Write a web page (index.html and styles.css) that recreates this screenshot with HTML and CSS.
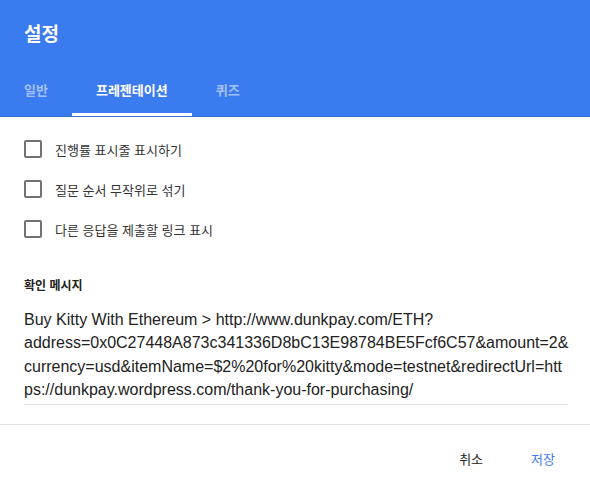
FILE: index.html
```html
<!DOCTYPE html>
<html lang="ko">
<head>
<meta charset="utf-8">
<link rel="stylesheet" href="styles.css">
</head>
<body>
<div class="dialog">
  <header class="header">
    <h1 class="title">설정</h1>
    <nav class="tabs">
      <div class="tab">일반</div>
      <div class="tab active">프레젠테이션</div>
      <div class="tab">퀴즈</div>
    </nav>
  </header>
  <section class="content">
    <div class="options">
      <label class="option"><span class="box"></span><span class="opt-text">진행률 표시줄 표시하기</span></label>
      <label class="option"><span class="box"></span><span class="opt-text">질문 순서 무작위로 섞기</span></label>
      <label class="option"><span class="box"></span><span class="opt-text">다른 응답을 제출할 링크 표시</span></label>
    </div>
    <div class="msg-label">확인 메시지</div>
    <div class="msg">Buy Kitty With Ethereum &gt; http://www.dunkpay.com/ETH?<br>address=0x0C27448A873c341336D8bC13E98784BE5Fcf6C57&amp;amount=2&amp;<br>currency=usd&amp;itemName=$2%20for%20kitty&amp;mode=testnet&amp;redirectUrl=htt<br>ps://dunkpay.wordpress.com/thank-you-for-purchasing/</div>
  </section>
  <footer class="footer">
    <button class="btn">취소</button>
    <button class="btn primary">저장</button>
  </footer>
</div>
</body>
</html>
```
FILE: styles.css
```css
* { box-sizing: border-box; }
html, body { margin: 0; padding: 0; background: #fff; }
body {
  font-family: "Liberation Sans", "Noto Sans CJK KR", sans-serif;
  width: 590px;
  height: 489px;
  overflow: hidden;
}
.dialog { width: 590px; }
.header {
  background: #3a7bf0;
  height: 117px;
  border-bottom: 1px solid #3570da;
  display: flex;
  flex-direction: column;
}
.title {
  margin: 0;
  padding: 20px 24px 0;
  height: 68px;
  font-family: "Noto Sans CJK KR", sans-serif;
  font-size: 19px;
  font-weight: 700;
  color: #fff;
  line-height: 26px;
}
.tabs {
  display: flex;
  height: 48px;
  padding-left: 0;
}
.tab {
  font-family: "Noto Sans CJK KR", sans-serif;
  font-size: 13px;
  font-weight: 700;
  color: rgba(255,255,255,0.55);
  height: 48px;
  line-height: 44px;
  padding: 0 24px;
  border-bottom: 3px solid transparent;
}
.tab.active {
  color: #fff;
  border-bottom-color: #fff;
}
.content {
  padding: 23px 24px 0;
}
.options {
  display: flex;
  flex-direction: column;
  gap: 22px;
}
.option {
  display: flex;
  align-items: center;
  height: 18px;
}
.box {
  width: 18px;
  height: 18px;
  border: 2px solid #717171;
  border-radius: 2px;
  flex: none;
}
.opt-text {
  margin-left: 13px;
  font-family: "Noto Sans CJK KR", sans-serif;
  font-size: 13px;
  color: #333;
}
.msg-label {
  margin-top: 38px;
  font-family: "Noto Sans CJK KR", sans-serif;
  font-size: 12px;
  font-weight: 700;
  color: #222;
  line-height: 18px;
}
.msg {
  margin-top: 13.5px;
  font-size: 16px;
  line-height: 23.5px;
  color: #222;
  width: 544px;
  white-space: nowrap;
  padding-bottom: 2px;
  border-bottom: 1px solid #e0e0e0;
}
.footer {
  margin-top: 19px;
  border-top: 1px solid #e0e0e0;
  display: flex;
  justify-content: flex-end;
  padding: 22px 11px 0 0;
  gap: 0;
}
.btn {
  background: none;
  border: 0;
  font-family: "Noto Sans CJK KR", sans-serif;
  font-size: 13px;
  color: #222;
  padding: 0 24px;
  height: 24px;
  line-height: 24px;
}
.btn.primary { color: #3a7bf0; }
```
